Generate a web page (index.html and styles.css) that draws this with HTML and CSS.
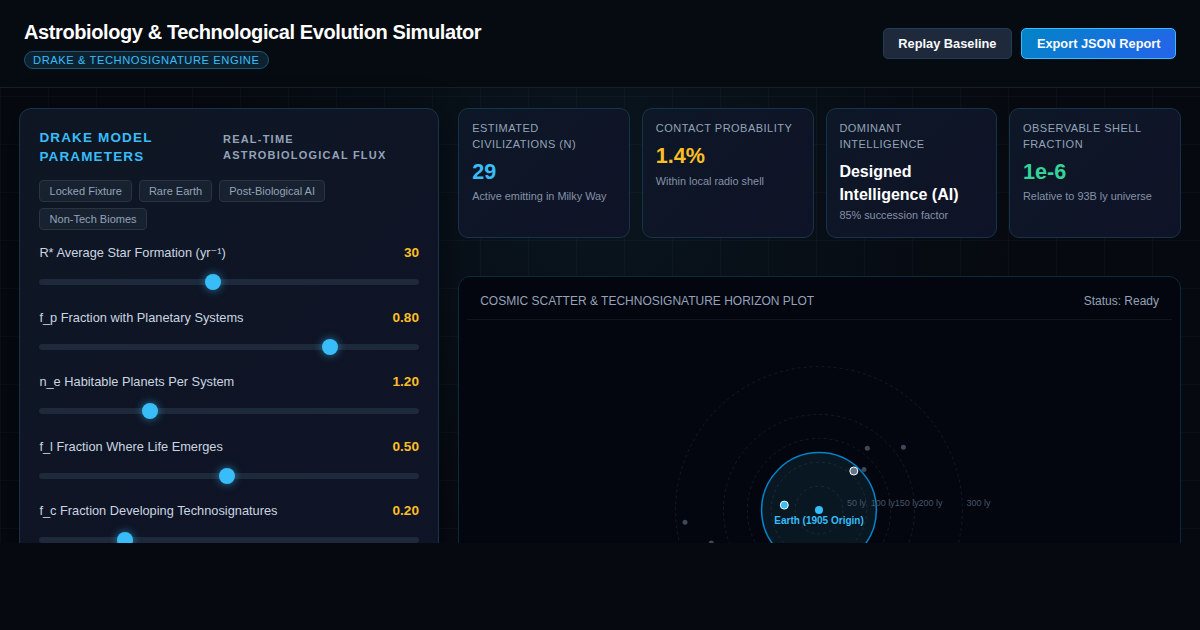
FILE: index.html
```
<!DOCTYPE html>
<html lang="en">
<head>
    <meta charset="UTF-8">
    <meta name="viewport" content="width=device-width, initial-scale=1.0">
    <title>Astrobiology &amp; Technological Evolution Simulator</title>
    <link rel="stylesheet" href="styles.css">
</head>
<body>
    <div class="app">
        <header>
            <div class="brand">
                <h1>Astrobiology &amp; Technological Evolution Simulator</h1>
                <span class="badge">Drake &amp; Technosignature Engine</span>
            </div>
            <div class="actions">
                <button type="button">Replay Baseline</button>
                <button type="button" class="primary">Export JSON Report</button>
            </div>
        </header>
        <main>
            <aside class="panel">
                <div class="panel-title">
                    <h2>Drake Model Parameters</h2>
                    <h3>Real-Time Astrobiological Flux</h3>
                </div>
                <div class="presets">
                    <span class="preset">Locked Fixture</span>
                    <span class="preset">Rare Earth</span>
                    <span class="preset">Post-Biological AI</span>
                    <span class="preset">Non-Tech Biomes</span>
                </div>
                <div class="control">
                    <label for="rStar"><span>R* Average Star Formation (yr<span class="sup">⁻</span>¹)</span> <b>30</b></label>
                    <input type="range" id="rStar" min="1" max="65" step="0.1" value="30.1">
                </div>
                <div class="control">
                    <label for="fP">f_p Fraction with Planetary Systems <b>0.80</b></label>
                    <input type="range" id="fP" min="0.1" max="1" step="0.001" value="0.8">
                </div>
                <div class="control">
                    <label for="nE">n_e Habitable Planets Per System <b>1.20</b></label>
                    <input type="range" id="nE" min="0.1" max="4" step="0.01" value="1.2">
                </div>
                <div class="control">
                    <label for="fL">f_l Fraction Where Life Emerges <b>0.50</b></label>
                    <input type="range" id="fL" min="0.01" max="1" step="0.001" value="0.5">
                </div>
                <div class="control">
                    <label for="fC">f_c Fraction Developing Technosignatures <b>0.20</b></label>
                    <input type="range" id="fC" min="0.01" max="0.9" step="0.001" value="0.2">
                </div>
            </aside>
            <section class="results">
                <div class="metrics">
                    <div class="metric">
                        <div class="metric-label">Estimated Civilizations (N)</div>
                        <div class="metric-value blue">29</div>
                        <div class="metric-note">Active emitting in Milky Way</div>
                    </div>
                    <div class="metric">
                        <div class="metric-label">Contact Probability</div>
                        <div class="metric-value amber">1.4%</div>
                        <div class="metric-note">Within local radio shell</div>
                    </div>
                    <div class="metric">
                        <div class="metric-label">Dominant Intelligence</div>
                        <div class="metric-value small">Designed Intelligence (AI)</div>
                        <div class="metric-note">85% succession factor</div>
                    </div>
                    <div class="metric">
                        <div class="metric-label">Observable Shell Fraction</div>
                        <div class="metric-value green">1e-6</div>
                        <div class="metric-note">Relative to 93B ly universe</div>
                    </div>
                </div>
                <div class="plot">
                    <div class="plot-head">
                        <span>COSMIC SCATTER &amp; TECHNOSIGNATURE HORIZON PLOT</span>
                        <span>Status: Ready</span>
                    </div>
                    <svg class="plot-canvas" width="704" height="380" viewBox="-351 -190 704 380">
                        <!-- radio horizon -->
                        <circle class="horizon" r="57.4"/>
                        <!-- distance rings -->
                        <g class="rings">
                            <circle r="23.9"/>
                            <circle r="47.8"/>
                            <circle r="71.7"/>
                            <circle r="95.6"/>
                            <circle r="143.4"/>
                        </g>
                        <g class="ring-labels">
                            <text x="27.9" y="-4">50 ly</text>
                            <text x="51.8" y="-4">100 ly</text>
                            <text x="75.7" y="-4">150 ly</text>
                            <text x="99.6" y="-4">200 ly</text>
                            <text x="147.4" y="-4">300 ly</text>
                        </g>
                        <g class="silent">
                            <circle cx="48.3" cy="-61.8" r="2.5"/>
                            <circle cx="84.4" cy="-62.8" r="2.5"/>
                            <circle cx="45" cy="-40.6" r="2.5"/>
                            <circle cx="-134" cy="12.2" r="2.5"/>
                            <circle cx="-107.7" cy="33" r="2.5"/>
                        </g>
                        <circle class="contact post" cx="34.8" cy="-39" r="4"/>
                        <circle class="contact" cx="-34.7" cy="-4.9" r="4"/>
                        <circle class="earth" r="4"/>
                        <text class="earth-label" y="14">Earth (1905 Origin)</text>
                    </svg>
                </div>
            </section>
        </main>
    </div>
</body>
</html>
```

FILE: styles.css
```
* {
    box-sizing: border-box;
    margin: 0;
    padding: 0;
}
body {
    font-family: "Liberation Sans", Arial, sans-serif;
    background-color: #060910;
    color: #f8fafc;
    line-height: 1.45;
}
.app {
    height: 543px;
    overflow: hidden;
    background-image:
        linear-gradient(rgba(255,255,255,0.024) 1px, transparent 1px),
        linear-gradient(90deg, rgba(255,255,255,0.024) 1px, transparent 1px),
        radial-gradient(circle at 50% 35%, #09151d 0%, #060910 60%);
    background-size: 48px 48px, 48px 48px, 100% 100%;
}
header {
    display: flex;
    justify-content: space-between;
    align-items: center;
    height: 88px;
    padding: 0 24px;
    background-color: #060a11;
    border-bottom: 1px solid #191e24;
}
h1 {
    font-size: 20px;
    line-height: 29px;
    letter-spacing: -0.4px;
    color: #fff;
}
.brand {
    display: flex;
    flex-direction: column;
    align-items: flex-start;
    gap: 4px;
}
.badge {
    padding: 0 8px;
    border: 1px solid #1c5674;
    border-radius: 10px;
    background-color: #0c2231;
    color: #38bdf8;
    font-size: 11.2px;
    line-height: 16px;
    letter-spacing: 0.56px;
    text-transform: uppercase;
}
.actions {
    display: flex;
    gap: 9.6px;
}
button {
    height: 31px;
    padding: 0 14.4px;
    border: 1px solid #1f3d55;
    border-radius: 5px;
    background-color: #1e293b;
    color: #f8fafc;
    font-family: inherit;
    font-size: 12.8px;
    font-weight: bold;
}
button.primary {
    border-color: #38bdf8;
    background: linear-gradient(135deg, #0284c7, #2563eb);
}
main {
    display: grid;
    grid-template-columns: 420px 1fr;
    align-items: start;
    gap: 19.2px;
    padding: 20px 19.2px;
}
.panel {
    padding: 19px 19.2px;
    height: 640px;
    border: 1px solid #16344c;
    border-radius: 12px;
    background: linear-gradient(135deg, #0e1623, #0f1327);
    box-shadow: 0 8px 32px rgba(0,0,0,0.5);
}
.panel-title {
    display: grid;
    grid-template-columns: 183.6px 1fr;
    align-items: center;
    margin-bottom: 14px;
}
h2 {
    padding-right: 40px;
    font-size: 13.5px;
    line-height: 19px;
    letter-spacing: 1.15px;
    text-transform: uppercase;
    color: #38bdf8;
}
h3 {
    font-size: 11px;
    line-height: 16px;
    letter-spacing: 1.22px;
    text-transform: uppercase;
    color: #94a3b8;
}
.presets {
    display: flex;
    flex-wrap: wrap;
    gap: 6px 6.6px;
    margin-bottom: 13px;
}
.preset {
    padding: 0 9.2px;
    border: 1px solid #293441;
    border-radius: 4px;
    background-color: #172130;
    color: #94a3b8;
    font-size: 11.04px;
    line-height: 20px;
}
.control {
    height: 64.5px;
}
.control label {
    display: flex;
    justify-content: space-between;
    font-size: 12.8px;
    line-height: 19px;
    color: #cbd5e1;
}
.sup {
    font-family: "DejaVu Sans", sans-serif;
    line-height: 1;
}
.control b {
    font-size: 13.6px;
    color: #fbbf24;
}
input[type=range] {
    display: block;
    appearance: none;
    width: 100%;
    height: 6px;
    margin-top: 17px;
    border-radius: 3px;
    background-color: #1e293b;
}
input[type=range]::-webkit-slider-thumb {
    appearance: none;
    width: 16px;
    height: 16px;
    border-radius: 50%;
    background-color: #38bdf8;
    box-shadow: 0 0 8px rgba(56,189,248,0.6);
}
.metrics {
    display: grid;
    grid-template-columns: repeat(4, 1fr);
    gap: 12px;
    margin-bottom: 38px;
}
.metric {
    height: 130px;
    padding: 12px 12.8px;
    border: 1px solid #15344b;
    border-radius: 10px;
    background: linear-gradient(135deg, #0d1726, #0f1327);
}
.metric-label {
    margin-bottom: 3.5px;
    font-size: 11px;
    line-height: 15.8px;
    letter-spacing: 0.48px;
    text-transform: uppercase;
    color: #94a3b8;
}
.metric-value {
    font-size: 21.6px;
    line-height: 31px;
    font-weight: bold;
}
.metric-value.small {
    margin-top: 7.3px;
    font-size: 16px;
    line-height: 23px;
    color: #fff;
}
.metric-label:has(+ .small) {
    margin-bottom: 4.2px;
}
.metric-note {
    margin-top: 1.3px;
    font-size: 10.88px;
    line-height: 16px;
    color: #8592a7;
}
.metric-value.small + .metric-note {
    margin-top: 1.2px;
}
.blue { color: #38bdf8; }
.amber { color: #fbbf24; }
.green { color: #34d399; }
.plot {
    padding: 8px;
    border: 1px solid #0c2a3b;
    border-radius: 12px;
    background-color: #03050f;
}
.plot-head {
    display: flex;
    justify-content: space-between;
    padding: 8px 12.8px 9px;
    border-bottom: 1px solid #12151f;
    font-size: 12px;
    line-height: 17px;
    color: #94a3b8;
}
.plot-canvas {
    display: block;
    margin: 0 auto;
}
.horizon {
    fill: #081722;
    stroke: #0284c7;
    stroke-width: 1.5;
}
.rings circle {
    fill: none;
    stroke: rgba(255,255,255,0.08);
    stroke-dasharray: 3 3;
}
.ring-labels {
    font-size: 9px;
    fill: #475569;
}
.silent {
    fill: #475569;
    opacity: 0.85;
}
.contact {
    fill: #38bdf8;
    stroke: #fff;
}
.contact.post {
    fill: #64748b;
}
.earth {
    fill: #38bdf8;
}
.earth-label {
    font-size: 10px;
    font-weight: bold;
    text-anchor: middle;
    fill: #38bdf8;
}
```
